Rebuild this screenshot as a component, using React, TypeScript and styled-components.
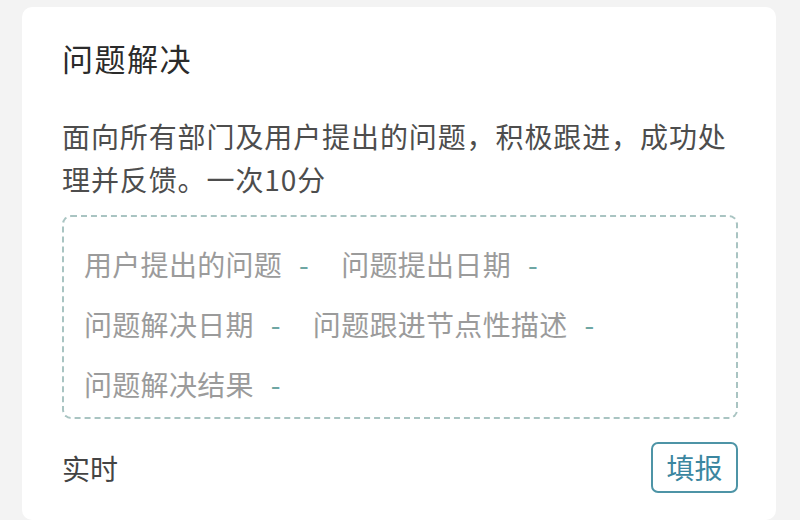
import React from "react";
import styled, { createGlobalStyle } from "styled-components";

const Global = createGlobalStyle`
  html, body {
    margin: 0;
    padding: 0;
    background: #f3f3f3;
    font-family: "Noto Sans CJK SC", "Noto Sans", sans-serif;
  }
  #root { height: 520px; overflow: hidden; }
`;

const Page = styled.div`
  padding: 7px 24px 0 22px;
  height: 520px;
  box-sizing: border-box;
`;

const Card = styled.div`
  background: #ffffff;
  border-radius: 10px;
  padding: 30px 38px 30px 40px;
  height: 100%;
  box-sizing: border-box;
  display: flex;
  flex-direction: column;
`;

const Title = styled.h2`
  margin: 0;
  font-size: 31px;
  letter-spacing: 1.5px;
  line-height: 42px;
  font-weight: 400;
  color: #2b2b2b;
`;

const Desc = styled.p`
  margin: 36px 0 0;
  font-size: 28px;
  letter-spacing: 0.9px;
  line-height: 43px;
  color: #4d4d4d;
`;

const Fields = styled.div`
  margin-top: 14px;
  border: 2px dashed #a9c4c2;
  border-radius: 9px;
  padding: 27px 20px 13px 20px;
  display: flex;
  flex-wrap: wrap;
  column-gap: 32px;
  row-gap: 20px;
`;

const Field = styled.div`
  display: flex;
  align-items: center;
  gap: 17px;
  font-size: 28px;
  letter-spacing: 0.3px;
  line-height: 40px;
  color: #9b9b9b;
`;

const Dash = styled.span`
  color: #6ea6a3;
`;

const Footer = styled.div`
  margin-top: 23px;
  display: flex;
  align-items: center;
  justify-content: space-between;
`;

const Mode = styled.span`
  font-size: 28px;
  line-height: 40px;
  color: #444444;
`;

const ReportButton = styled.button`
  font-family: inherit;
  font-size: 28px;
  line-height: 43px;
  height: 51px;
  width: 87px;
  padding: 0;
  background: #ffffff;
  color: #3b86a0;
  border: 2px solid #4d94a6;
  border-radius: 7px;
  box-sizing: border-box;
`;

const fields = [
  "用户提出的问题",
  "问题提出日期",
  "问题解决日期",
  "问题跟进节点性描述",
  "问题解决结果",
];

export default function App() {
  return (
    <>
      <Global />
      <Page>
        <Card>
          <Title>问题解决</Title>
          <Desc>面向所有部门及用户提出的问题，积极跟进，成功处理并反馈。一次10分</Desc>
          <Fields>
            {fields.map((f) => (
              <Field key={f}>
                <span>{f}</span>
                <Dash>-</Dash>
              </Field>
            ))}
          </Fields>
          <Footer>
            <Mode>实时</Mode>
            <ReportButton>填报</ReportButton>
          </Footer>
        </Card>
      </Page>
    </>
  );
}
